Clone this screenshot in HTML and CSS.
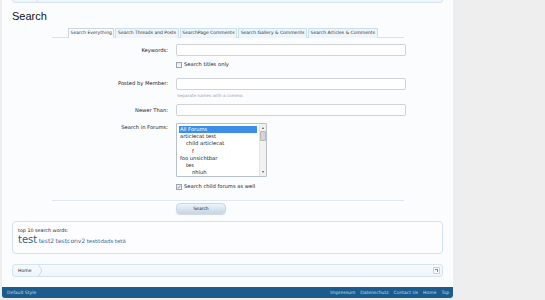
FILE: index.html
```html
<!DOCTYPE html>
<html lang="en">
<head>
    <meta charset="UTF-8">
    <title>Search</title>
    <link rel="stylesheet" href="styles.css">
</head>
<body>
    <div class="page">
        <!-- breadcrumb (top, cut off by the viewport) -->
        <div class="crumbs crumbs-top">
            <span class="crumb"></span>
        </div>

        <h1 class="title">Search</h1>

        <div class="search-form">
            <ul class="tabs">
                <li class="tab active">Search Everything</li>
                <li class="tab">Search Threads and Posts</li>
                <li class="tab">SearchPage Comments</li>
                <li class="tab">Search Gallery &amp; Comments</li>
                <li class="tab">Search Articles &amp; Comments</li>
            </ul>

            <div class="form-body">
                <div class="row row-keywords">
                    <label class="label">Keywords:</label>
                    <div class="input"></div>
                </div>
                <div class="row row-titles">
                    <span></span>
                    <label class="check"><span class="box"></span>Search titles only</label>
                </div>
                <div class="row row-member">
                    <label class="label">Posted by Member:</label>
                    <div class="field">
                        <div class="input"></div>
                        <p class="hint">Separate names with a comma.</p>
                    </div>
                </div>
                <div class="row row-newer">
                    <label class="label">Newer Than:</label>
                    <div class="input"></div>
                </div>
                <div class="row row-forums">
                    <label class="label label-top">Search in Forums:</label>
                    <div class="select">
                        <ul class="options">
                            <li class="selected">All Forums</li>
                            <li>articlecat test</li>
                            <li class="depth1">child articlecat</li>
                            <li class="depth2">f</li>
                            <li>foo unsichtbar</li>
                            <li class="depth1">tes</li>
                            <li class="depth2">nhiuh</li>
                        </ul>
                        <div class="scrollbar">
                            <span class="arrow up"></span>
                            <span class="thumb"></span>
                            <span class="arrow down"></span>
                        </div>
                    </div>
                </div>
                <div class="row row-child">
                    <span></span>
                    <label class="check"><span class="box checked">&#10003;</span>Search child forums as well</label>
                </div>
            </div>

            <div class="submit">
                <button class="button">Search</button>
            </div>
        </div>

        <div class="top-words">
            <div class="top-words-title">top 10 search words:</div>
            <div class="words">
                <a class="word big">test</a>
                <a class="word">test2</a>
                <a class="word">testconv2</a>
                <a class="word small">testödads</a>
                <a class="word small">tetä</a>
            </div>
        </div>

        <div class="crumbs crumbs-bottom">
            <span class="crumb">Home</span>
            <span class="jump"></span>
        </div>
    </div>

    <div class="footer">
        <span class="style-name">Default Style</span>
        <ul class="footer-links">
            <li>Impressum</li>
            <li>Datenschutz</li>
            <li>Contact Us</li>
            <li>Home</li>
            <li>Top</li>
        </ul>
    </div>
</body>
</html>
```

FILE: styles.css
```css
body {
    margin: 0;
    background-color: #eeeeee;
    font-family: 'DejaVu Sans', sans-serif;
    color: #141414;
    width: 545px;
    height: 300px;
    overflow: hidden;
}

.page {
    width: 431px;
    margin-left: 2px;
    padding: 0 10px 10px;
    background-color: #fbfcfe;
}

/* breadcrumbs */

.crumbs {
    display: flex;
    align-items: center;
    height: 11px;
    border: 1px solid #d5e4ee;
    border-radius: 3px;
    background: linear-gradient(#f6fafd, #eef5fa);
    position: relative;
}

.crumbs-top {
    margin-top: -10px;
}

.crumb {
    position: relative;
    padding: 0 8px 0 5px;
    font-size: 4.6px;
    line-height: 11px;
    color: #222;
    border-radius: 3px 0 0 3px;
}

.crumb::after {
    content: '';
    position: absolute;
    right: -3px;
    top: 1px;
    width: 8px;
    height: 8px;
    border-top: 1px solid #c7d6e2;
    border-right: 1px solid #c7d6e2;
    transform: scaleX(0.6) rotate(45deg);
}

.crumbs-top .crumb {
    width: 12px;
    height: 11px;
}

.jump {
    margin-left: auto;
    margin-right: 2px;
    width: 5px;
    height: 5px;
    border: 1px solid #c5d2dc;
    border-radius: 1px;
    background: #f8fbfd;
    position: relative;
}

.jump::after {
    content: '';
    position: absolute;
    left: 1px;
    top: 1px;
    width: 2px;
    height: 2px;
    border-top: 1px solid #7a8c9a;
    border-right: 1px solid #7a8c9a;
}

.title {
    margin: 6px 0 0;
    font-family: 'Liberation Sans', sans-serif;
    font-weight: normal;
    font-size: 11px;
    line-height: 14px;
    color: #111;
}

/* search form */

.search-form {
    margin: 5px 39px 0 40px;
}

.tabs {
    display: flex;
    margin: 0;
    padding: 0 0 0 16px;
    list-style: none;
    border-bottom: 1px solid #d5e4ee;
}

.tab {
    font-size: 4.5px;
    line-height: 8px;
    padding: 0 1.6px;
    margin-right: 1px;
    color: #333;
    background: #eef6fb;
    border: 1px solid #c8dfee;
    border-bottom: none;
    border-radius: 1px 1px 0 0;
    margin-bottom: -1px;
    white-space: nowrap;
}

.tab.active {
    background: #fbfcfe;
    border-color: #c8d5de;
    border-bottom: 1px solid #fbfcfe;
}

.form-body {
    display: flex;
    flex-direction: column;
    border-bottom: 1px solid #dfe8ef;
    padding-bottom: 10px;
}

.row {
    display: grid;
    grid-template-columns: 116px 230px;
    column-gap: 8px;
    align-items: center;
}

.row-keywords { margin-top: 6px; }
.row-titles { margin-top: 5px; }
.row-member { margin-top: 10px; align-items: start; }
.row-newer { margin-top: 5px; }
.row-forums { margin-top: 7px; align-items: start; }
.row-child { margin-top: 6px; }

.label {
    text-align: right;
    font-size: 5.2px;
    line-height: 11px;
    color: #222;
}

.label-top {
    line-height: 8px;
}

.input {
    height: 10px;
    background: #fff;
    border: 1px solid #cfd3d6;
    border-radius: 2px;
}

.hint {
    margin: 3px 0 0 1px;
    font-size: 4.2px;
    line-height: 6px;
    color: #9aa4ad;
}

.check {
    display: flex;
    align-items: center;
    font-size: 5.2px;
    line-height: 7px;
    color: #222;
}

.box {
    width: 4px;
    height: 4px;
    margin-right: 2px;
    border: 1px solid #9ca5ad;
    background: linear-gradient(#e8eaec, #fafafa);
    font-size: 5px;
    line-height: 4px;
    text-align: center;
    color: #4a5560;
}

.select {
    display: flex;
    width: 89px;
    height: 52px;
    background: #fff;
    border: 1px solid #b9c1c8;
    border-radius: 1px;
    overflow: hidden;
}

.options {
    flex: 1;
    margin: 0;
    padding: 2px 2px 0 2px;
    list-style: none;
}

.options li {
    font-size: 5.2px;
    line-height: 7.2px;
    padding-left: 1px;
    color: #222;
    white-space: nowrap;
}

.options li.selected {
    background: #3d8ee6;
    color: #fff;
    line-height: 6.5px;
    margin-bottom: 0.7px;
}

.options .depth1 { padding-left: 7px; }
.options .depth2 { padding-left: 13px; }

.scrollbar {
    display: flex;
    flex-direction: column;
    align-items: center;
    width: 6px;
    padding: 1px 0;
    background: #f1f1f1;
    border-left: 1px solid #e4e4e4;
}

.arrow {
    width: 0;
    height: 0;
    border-left: 1.5px solid transparent;
    border-right: 1.5px solid transparent;
}

.arrow.up {
    margin-top: 2px;
    border-bottom: 2px solid #555;
}

.arrow.down {
    margin-top: auto;
    margin-bottom: 2px;
    border-top: 2px solid #555;
}

.thumb {
    width: 4px;
    height: 8px;
    margin-top: 2px;
    background: #d5d5d5;
    border: 1px solid #b8b8b8;
    border-radius: 1px;
}

.submit {
    padding: 2px 0 0 124px;
}

.button {
    display: block;
    width: 50px;
    height: 11px;
    padding: 0;
    border: 1px solid #c8d8e6;
    border-radius: 4px;
    background: linear-gradient(#eef4f9, #c6d8e8);
    box-shadow: 0 1px 1px rgba(0, 0, 0, 0.15);
    font-family: 'DejaVu Sans', sans-serif;
    font-size: 4.5px;
    color: #222;
}

/* top words */

.top-words {
    margin-top: 7px;
    height: 25px;
    padding: 3px 5px;
    border: 1px solid #d0e3ec;
    border-radius: 4px;
    background: #fdfdff;
}

.top-words-title {
    margin-top: 2px;
    font-size: 4.8px;
    line-height: 7px;
    color: #222;
}

.words {
    display: flex;
    align-items: baseline;
    gap: 1.5px;
}

.word {
    font-size: 6px;
    color: #3b6a92;
}

.word.small {
    font-size: 5.4px;
}

.word.big {
    font-size: 10px;
    line-height: 12px;
    color: #2d5e86;
}

.crumbs-bottom {
    margin-top: 10px;
}

/* footer */

.footer {
    display: flex;
    align-items: center;
    justify-content: space-between;
    width: 442px;
    height: 11px;
    margin: 0 0 0 2px;
    padding: 0 4px 0 5px;
    background-color: #1c5c8c;
    border-radius: 0 0 3px 3px;
}

.style-name,
.footer-links li {
    font-size: 4.5px;
    color: #c9dced;
}

.footer-links {
    display: flex;
    gap: 5px;
    margin: 0;
    padding: 0;
    list-style: none;
}
```
